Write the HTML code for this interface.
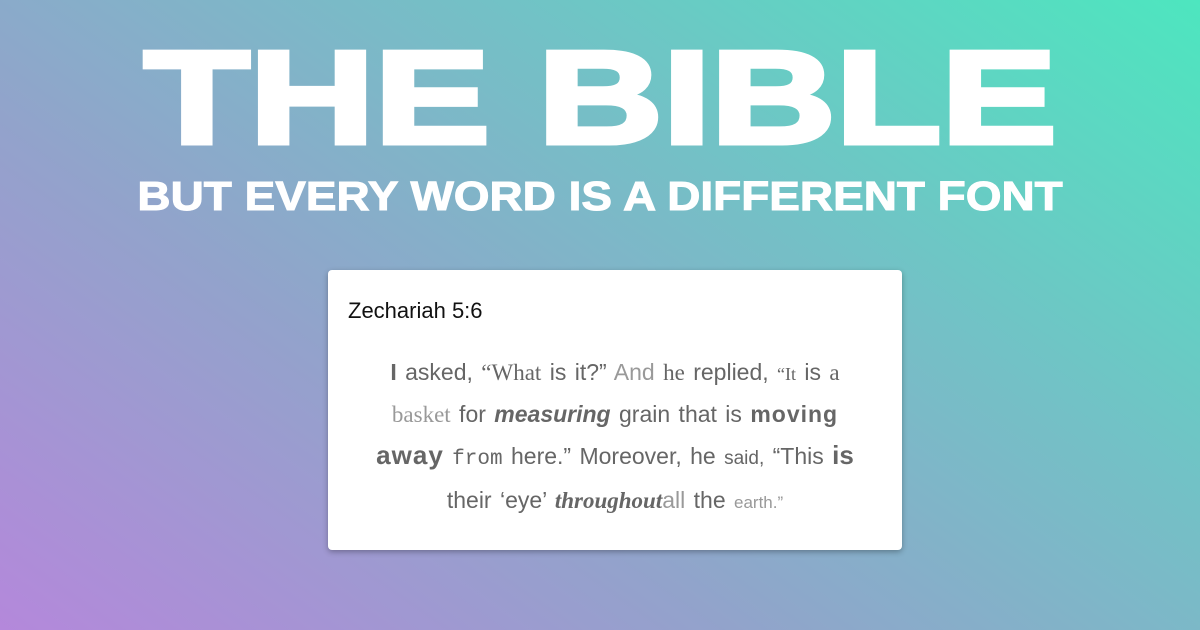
<!DOCTYPE html>
<html><head><style>
html,body{margin:0;padding:0}
body{width:1200px;height:630px;overflow:hidden;position:relative;
background:linear-gradient(35deg,#b488db 0%,#92a3cb 35%,#74c0c6 65%,#4de6bf 100%);
font-family:"Liberation Sans",sans-serif}
.t1{position:absolute;left:0;width:1200px;top:32px;text-align:center;color:#fff;font-weight:bold;font-size:132px;line-height:132px;white-space:nowrap;-webkit-text-stroke:5px #fff}
.t1 span{display:inline-block;transform:scaleX(1.31)}
.t2{position:absolute;left:0;width:1200px;top:174px;text-align:center;color:#fff;font-weight:bold;font-size:41px;line-height:44px;white-space:nowrap;-webkit-text-stroke:1px #fff}
.t2 span{display:inline-block;transform:scaleX(1.12)}
.card{position:absolute;left:328px;top:270px;width:574px;height:280px;background:#fff;border-radius:4px;box-shadow:0 2px 6px rgba(0,0,0,.3)}
.h{position:absolute;left:20px;top:28px;font-size:22px;color:#111}
.v{position:absolute;left:10px;width:554px;top:82px;text-align:center;color:#666;font-size:23px;line-height:40px;word-spacing:2px}
.s{font-family:"Liberation Serif",serif}
.b{font-weight:bold}
.l{color:#999}
</style></head><body>
<div class="t1"><span>THE BIBLE</span></div>
<div class="t2"><span>BUT EVERY WORD IS A DIFFERENT FONT</span></div>
<div class="card">
<div class="h">Zechariah 5:6</div>
<div class="v">
<span class="b">I</span> asked, <span class="s">“What</span> is it?” <span class="l">And</span> <span class="s">he</span> replied, <span class="s" style="font-size:18px">“It</span> is <span class="s">a</span><br>
<span class="s l">basket</span> for <span class="b" style="font-style:italic">measuring</span> grain that is <span class="b" style="letter-spacing:1px">moving</span><br>
<span class="b" style="font-size:26px;letter-spacing:1px">away</span> <span style="font-family:'Liberation Mono',monospace;font-size:21px">from</span> here.” Moreover, <span>he</span> <span style="font-size:19px">said,</span> “This <span class="b" style="font-size:26px">is</span><br>
their ‘eye’ <span class="s" style="font-style:italic;font-weight:bold">throughout</span><span class="l">all</span> the <span class="l" style="font-size:17px">earth.”</span>
</div>
</div>
</body></html>
